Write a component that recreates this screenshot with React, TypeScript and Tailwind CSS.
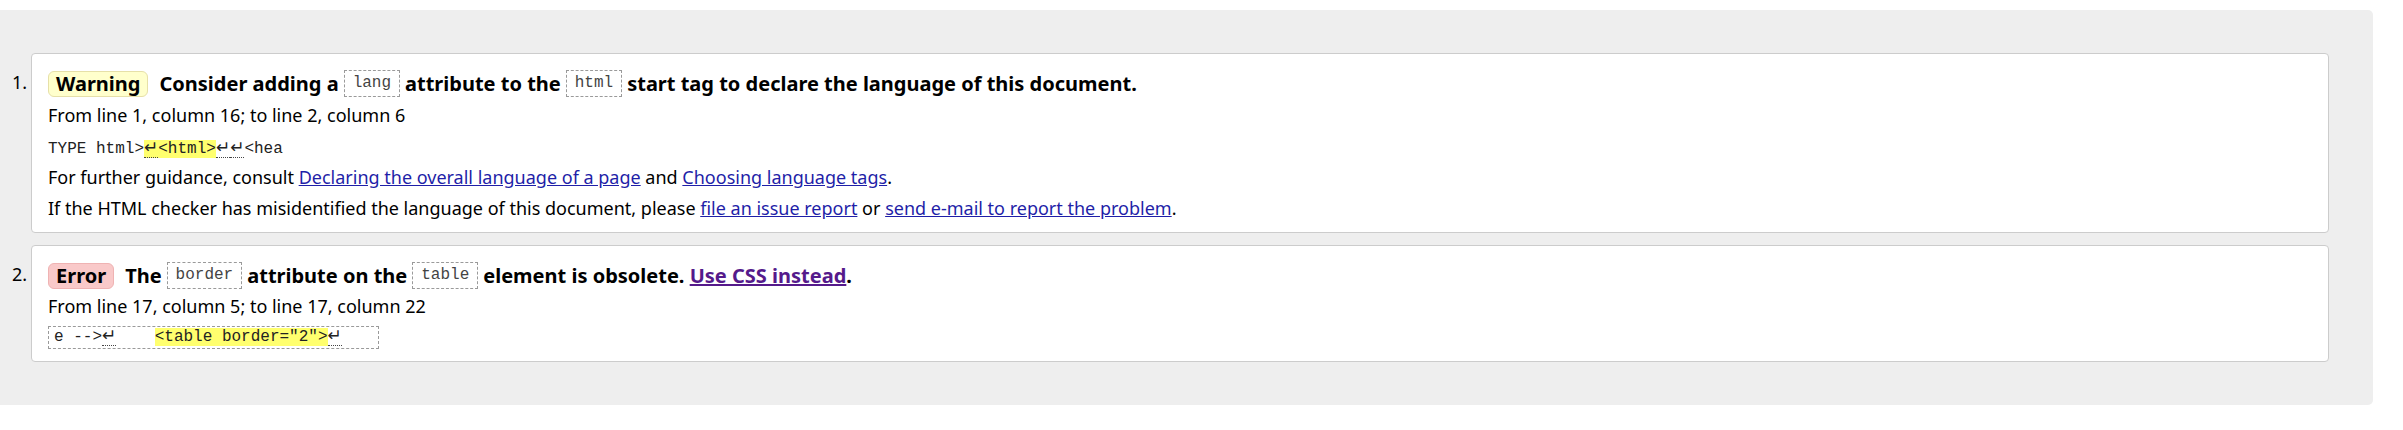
import React from 'react';

// little return-arrow glyph with the dotted underline the checker puts under line breaks
function Ret() {
  return (
    <span className="font-['DejaVu_Sans',sans-serif] text-[17px] leading-[17px] border-b border-dotted border-[#444]">↵</span>
  );
}

function Code({ children }: { children: React.ReactNode }) {
  return (
    <code className="inline-block align-middle h-[27px] leading-[25px] mx-[5px] px-[8px] border border-dashed border-[#9a9a9a] font-['Liberation_Mono',monospace] text-[16px] font-normal text-[#444]">
      {children}
    </code>
  );
}

function Badge({ kind }: { kind: 'warning' | 'error' }) {
  const cls =
    kind === 'warning'
      ? 'bg-[#ffffcc] border-[#e6e0a8]'
      : 'bg-[#f9c9c9] border-[#efb3b3]';
  return (
    <span
      className={`inline-block align-middle h-[26px] leading-[24px] px-[7px] mr-[11px] rounded-[6px] border ${cls}`}
    >
      {kind === 'warning' ? 'Warning' : 'Error'}
    </span>
  );
}

const link = 'underline text-[#1f1fa8]';

export default function App() {
  return (
    <div className="pt-[10px] bg-white font-['Noto_Sans',sans-serif] text-black">
      <div className="w-[2373px] bg-[#eeeeee] rounded-r-[5px] pt-[43px] pb-[43px] pr-[44px]">
        <ol className="flex flex-col gap-[12px]">
          <li className="flex">
            <div className="w-[31px] shrink-0 pl-[12px] pt-[14px] leading-[30px] text-[18px]">1.</div>
            <div className="flex-1 bg-white border border-[#cccccc] rounded-[4px] pl-[16px] pt-[13px] pb-[8px]">
              <p className="h-[30px] leading-[30px] text-[20px] font-bold">
                <Badge kind="warning" />
                <span className="align-middle">Consider adding a</span>
                <Code>lang</Code>
                <span className="align-middle">attribute to the</span>
                <Code>html</Code>
                <span className="align-middle">start tag to declare the language of this document.</span>
              </p>
              <div className="mt-[3px] text-[18px] leading-[31px]">
                <p>From line 1, column 16; to line 2, column 6</p>
                <p className="h-[31px] pt-[5px] leading-[26px] font-['Liberation_Mono',monospace] text-[16px] text-[#222] whitespace-pre">
                  TYPE html&gt;<mark className="bg-[#ffff6e] text-[#222]"><Ret />&lt;html&gt;</mark><Ret /><Ret />&lt;hea
                </p>
                <p>
                  For further guidance, consult{' '}
                  <a href="#" className={link}>Declaring the overall language of a page</a> and{' '}
                  <a href="#" className={link}>Choosing language tags</a>.
                </p>
                <p>
                  If the HTML checker has misidentified the language of this document, please{' '}
                  <a href="#" className={link}>file an issue report</a> or{' '}
                  <a href="#" className={link}>send e-mail to report the problem</a>.
                </p>
              </div>
            </div>
          </li>

          <li className="flex">
            <div className="w-[31px] shrink-0 pl-[12px] pt-[14px] leading-[30px] text-[18px]">2.</div>
            <div className="flex-1 bg-white border border-[#cccccc] rounded-[4px] pl-[16px] pt-[13px] pb-[12px]">
              <p className="h-[30px] leading-[30px] text-[20px] font-bold">
                <Badge kind="error" />
                <span className="align-middle">The</span>
                <Code>border</Code>
                <span className="align-middle">attribute on the</span>
                <Code>table</Code>
                <span className="align-middle">
                  element is obsolete.{' '}
                  <a href="#" className="underline text-[#551a8b]">Use CSS instead</a>.
                </span>
              </p>
              <p className="mt-[2px] text-[18px] leading-[30px]">From line 17, column 5; to line 17, column 22</p>
              <div className="mt-[5px] w-[331px] h-[23px] leading-[21px] px-[5px] border border-dashed border-[#9a9a9a] font-['Liberation_Mono',monospace] text-[16px] text-[#222] whitespace-pre">
                e --&gt;<Ret />    <mark className="bg-[#ffff6e] text-[#222]">&lt;table border="2"&gt;</mark><Ret />
              </div>
            </div>
          </li>
        </ol>
      </div>
    </div>
  );
}
